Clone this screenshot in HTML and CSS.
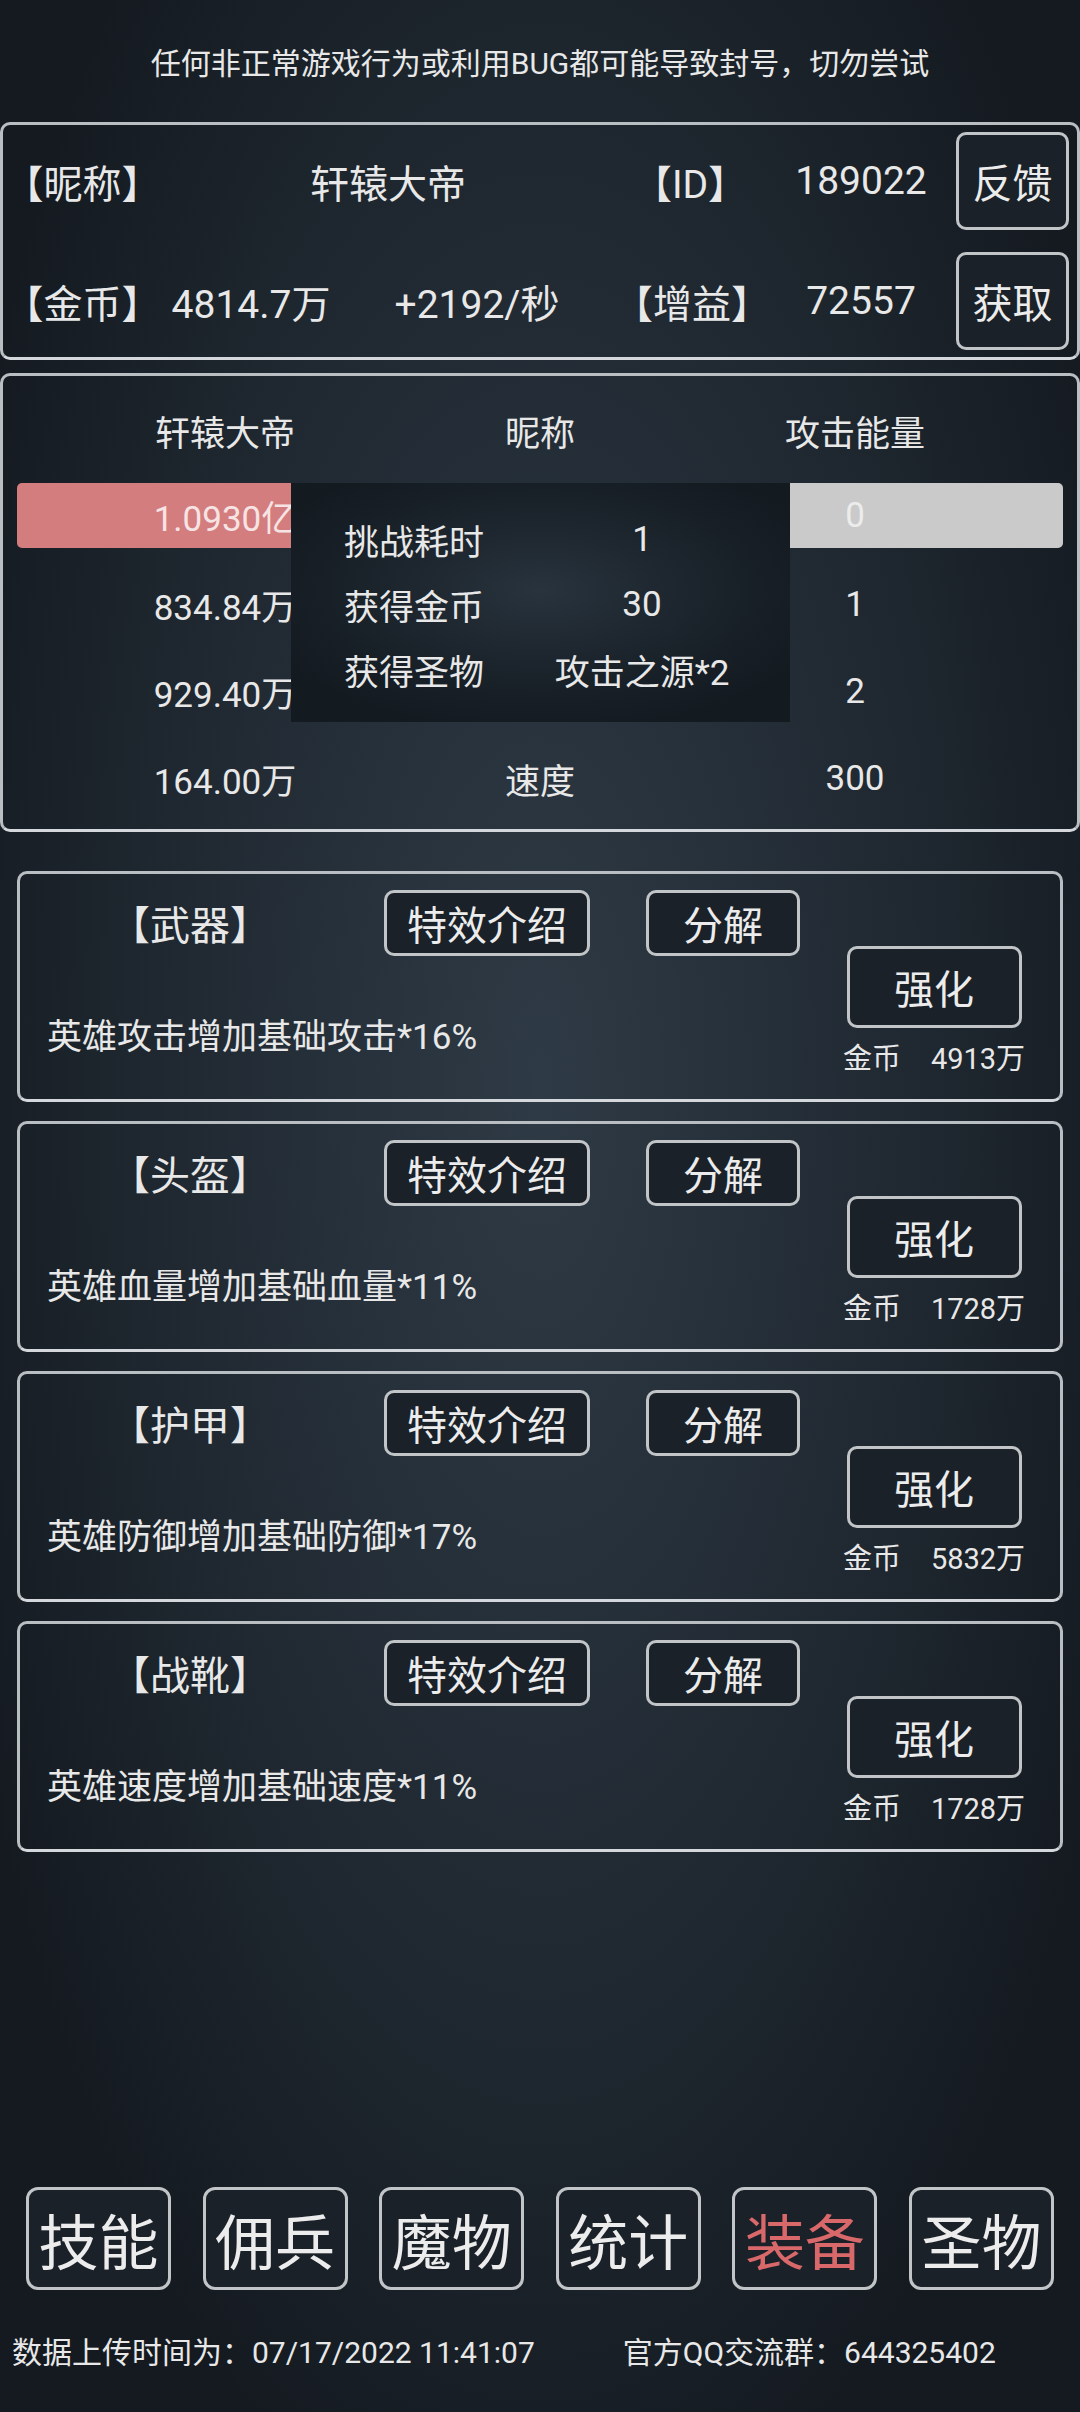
FILE: index.html
```html
<!DOCTYPE html>
<html lang="zh">
<head>
    <meta charset="UTF-8">
    <meta name="viewport" content="width=device-width, initial-scale=1.0">
    <title>装备</title>
    <link rel="stylesheet" href="styles.css">
</head>
<body>
<div class="page">
    <div class="notice">任何非正常游戏行为或利用BUG都可能导致封号，切勿尝试</div>

    <section class="panel info">
        <span>【昵称】</span>
        <span class="span2">轩辕大帝</span>
        <span>【ID】</span>
        <span>189022</span>
        <button class="btn info-btn">反馈</button>
        <span>【金币】</span>
        <span>4814.7万</span>
        <span>+2192/秒</span>
        <span>【增益】</span>
        <span>72557</span>
        <button class="btn info-btn">获取</button>
    </section>

    <section class="panel battle">
        <div class="b-row head">
            <span>轩辕大帝</span><span>昵称</span><span>攻击能量</span>
        </div>
        <div class="b-row bar">
            <span class="hp">1.0930亿</span><span></span><span class="energy">0</span>
        </div>
        <div class="b-row">
            <span>834.84万</span><span></span><span>1</span>
        </div>
        <div class="b-row">
            <span>929.40万</span><span></span><span>2</span>
        </div>
        <div class="b-row">
            <span>164.00万</span><span>速度</span><span>300</span>
        </div>

        <div class="reward">
            <div class="reward-row"><span>挑战耗时</span><span>1</span></div>
            <div class="reward-row"><span>获得金币</span><span>30</span></div>
            <div class="reward-row"><span>获得圣物</span><span>攻击之源*2</span></div>
        </div>
    </section>

    <section class="equip">
        <div class="panel card">
            <div class="card-main">
                <div class="card-top">
                    <span class="slot">【武器】</span>
                    <button class="btn btn-fx">特效介绍</button>
                    <button class="btn btn-split">分解</button>
                </div>
                <div class="card-desc">英雄攻击增加基础攻击*16%</div>
            </div>
            <div class="card-side">
                <button class="btn btn-up">强化</button>
                <div class="cost"><span>金币</span><span>4913万</span></div>
            </div>
        </div>
        <div class="panel card">
            <div class="card-main">
                <div class="card-top">
                    <span class="slot">【头盔】</span>
                    <button class="btn btn-fx">特效介绍</button>
                    <button class="btn btn-split">分解</button>
                </div>
                <div class="card-desc">英雄血量增加基础血量*11%</div>
            </div>
            <div class="card-side">
                <button class="btn btn-up">强化</button>
                <div class="cost"><span>金币</span><span>1728万</span></div>
            </div>
        </div>
        <div class="panel card">
            <div class="card-main">
                <div class="card-top">
                    <span class="slot">【护甲】</span>
                    <button class="btn btn-fx">特效介绍</button>
                    <button class="btn btn-split">分解</button>
                </div>
                <div class="card-desc">英雄防御增加基础防御*17%</div>
            </div>
            <div class="card-side">
                <button class="btn btn-up">强化</button>
                <div class="cost"><span>金币</span><span>5832万</span></div>
            </div>
        </div>
        <div class="panel card">
            <div class="card-main">
                <div class="card-top">
                    <span class="slot">【战靴】</span>
                    <button class="btn btn-fx">特效介绍</button>
                    <button class="btn btn-split">分解</button>
                </div>
                <div class="card-desc">英雄速度增加基础速度*11%</div>
            </div>
            <div class="card-side">
                <button class="btn btn-up">强化</button>
                <div class="cost"><span>金币</span><span>1728万</span></div>
            </div>
        </div>
    </section>

    <nav class="tabs">
        <button class="btn tab">技能</button>
        <button class="btn tab">佣兵</button>
        <button class="btn tab">魔物</button>
        <button class="btn tab">统计</button>
        <button class="btn tab on">装备</button>
        <button class="btn tab">圣物</button>
    </nav>

    <footer class="footer">
        <span>数据上传时间为：07/17/2022 11:41:07</span>
        <span class="qq">官方QQ交流群：644325402</span>
    </footer>
</div>
</body>
</html>
```

FILE: styles.css
```css
body {
    margin: 0;
    width: 1080px;
    height: 2412px;
    background: radial-gradient(ellipse 58% 62% at 50% 45%, #2e3a45 0%, #212a33 55%, #141a20 100%);
    color: #e8e8e8;
    font-family: Roboto, "Noto Sans CJK SC", sans-serif;
}
.page {
    display: flex;
    flex-direction: column;
    height: 2412px;
}
.notice {
    height: 122px;
    display: flex;
    align-items: center;
    justify-content: center;
    font-size: 30px;
}
.panel {
    box-sizing: border-box;
    border: 3px solid #b9bec3;
    border-bottom-color: #d4d8dc;
    border-radius: 10px;
}
.btn {
    box-sizing: border-box;
    padding: 0;
    margin: 0;
    font-family: inherit;
    color: #ececec;
    background: #1a2128;
    border: 3px solid #c2c5c8;
    border-radius: 10px;
    display: flex;
    align-items: center;
    justify-content: center;
}

/* top info */
.info {
    height: 238px;
    display: grid;
    grid-template-columns: 159px 178px 274px 152px 190px 113px;
    grid-template-rows: 98px 98px;
    row-gap: 22px;
    padding: 7px 8px 7px 0;
    align-items: center;
    justify-items: center;
    font-size: 39px;
}
.span2 {
    grid-column: span 2;
}
.info-btn {
    width: 113px;
    height: 98px;
    font-size: 40px;
}

/* battle stats */
.battle {
    position: relative;
    height: 459px;
    margin-top: 13px;
    padding: 16px 14px 7px;
    font-size: 35px;
}
.b-row {
    display: grid;
    grid-template-columns: 416px 214px 416px;
    height: 87px;
    align-items: center;
    justify-items: center;
}
.b-row.head {
    height: 76px;
    margin-bottom: 15px;
}
.b-row.bar {
    height: 65px;
    margin-bottom: 13px;
    border-radius: 5px;
    background: linear-gradient(90deg, #d47d7e 50%, #cacaca 50%);
}
.hp {
    color: #f6e4e4;
}
.energy {
    color: #ececec;
}
.reward {
    position: absolute;
    left: 288px;
    top: 107px;
    width: 499px;
    height: 239px;
    box-sizing: border-box;
    padding-top: 24px;
    background: radial-gradient(ellipse 60% 60% at 50% 45%, #28333d 0%, #1a222a 60%, #131a20 100%);
}
.reward-row {
    display: grid;
    grid-template-columns: 150px 296px;
    height: 65px;
    padding-left: 53px;
    align-items: center;
}
.reward-row span:last-child {
    text-align: center;
}

/* equipment cards */
.equip {
    margin-top: 39px;
    padding: 0 17px;
    display: flex;
    flex-direction: column;
    gap: 19px;
}
.card {
    height: 231px;
    display: flex;
}
.card-main {
    flex: 1;
    padding-top: 16px;
}
.card-top {
    display: flex;
    align-items: center;
    height: 66px;
}
.slot {
    margin-left: 90px;
    width: 162px;
    font-size: 40px;
}
.btn-fx {
    margin-left: 112px;
    width: 206px;
    height: 66px;
    font-size: 40px;
}
.btn-split {
    margin-left: 56px;
    width: 154px;
    height: 66px;
    font-size: 40px;
}
.card-desc {
    margin-top: 62px;
    padding-left: 27px;
    font-size: 35px;
    line-height: 40px;
}
.card-side {
    width: 200px;
    margin-right: 26px;
    padding-top: 72px;
    display: flex;
    flex-direction: column;
    align-items: center;
}
.btn-up {
    width: 175px;
    height: 82px;
    font-size: 40px;
}
.cost {
    margin-top: 14px;
    display: flex;
    gap: 30px;
    font-size: 29px;
    line-height: 34px;
}

/* bottom tabs */
.tabs {
    margin-top: auto;
    display: flex;
    justify-content: space-between;
    padding: 0 26px;
}
.tab {
    width: 145px;
    height: 103px;
    font-size: 60px;
    border-radius: 12px;
}
.tab.on {
    color: #d9686b;
}
.footer {
    margin: 43px 0 39px;
    padding-left: 12px;
    display: flex;
    font-size: 30px;
    line-height: 40px;
}
.qq {
    margin-left: 88px;
}
```
